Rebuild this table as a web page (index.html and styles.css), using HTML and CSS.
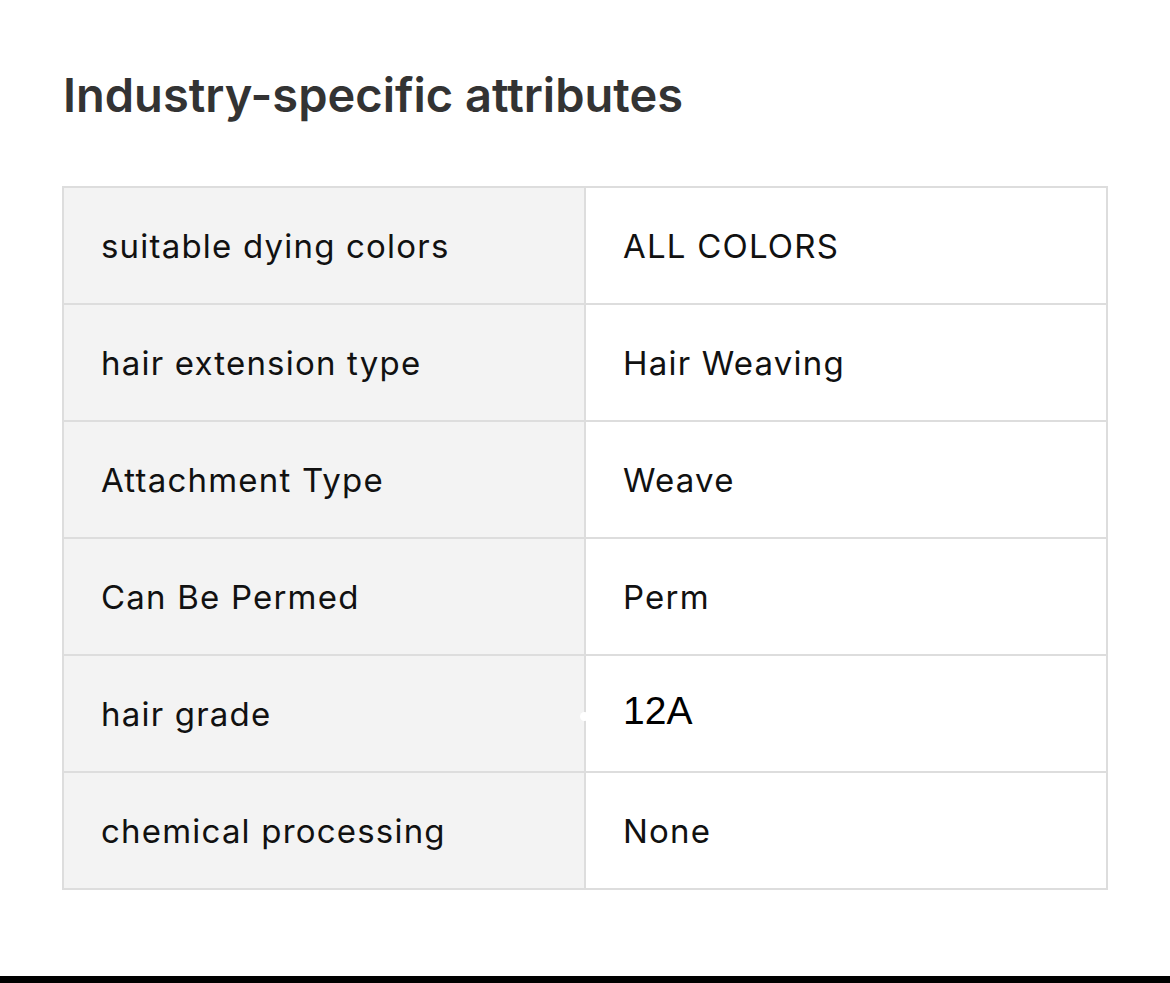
FILE: index.html
```html
<!DOCTYPE html>
<html>
<head>
<meta charset="utf-8">
<link rel="stylesheet" href="styles.css">
</head>
<body>
<div class="page">
  <h1 class="title">Industry-specific attributes</h1>
  <table class="attrs">
    <tr><td class="k">suitable dying colors</td><td class="v">ALL COLORS</td></tr>
    <tr><td class="k">hair extension type</td><td class="v">Hair Weaving</td></tr>
    <tr><td class="k">Attachment Type</td><td class="v">Weave</td></tr>
    <tr><td class="k">Can Be Permed</td><td class="v">Perm</td></tr>
    <tr><td class="k">hair grade</td><td class="v grade"><span class="dot"></span><span class="alt">12A</span></td></tr>
    <tr><td class="k">chemical processing</td><td class="v">None</td></tr>
  </table>
</div>
<div class="bar"></div>
</body>
</html>
```
FILE: styles.css
```css
html, body { margin: 0; padding: 0; background: #fff; }
body { font-family: Inter, "Noto Sans", sans-serif; }
.page { padding: 62px 62px 0 62px; height: 976px; box-sizing: border-box; }
.title {
  margin: 0 0 0 1px;
  font-size: 47px;
  font-weight: 600;
  color: #333;
  line-height: 66px;
  letter-spacing: 0;
}
.attrs {
  margin-top: 58px;
  width: 1046px;
  border-collapse: collapse;
  border: 2px solid #ddd;
}
.attrs td {
  border: 2px solid #ddd;
  height: 115px;
  padding: 0 0 0 37px;
  font-size: 33px;
  color: #111;
  letter-spacing: 1.2px;
  vertical-align: middle;
}
.attrs td.k { background: #f3f3f3; width: 483px; }
.attrs td.v { background: #fff; }
.grade { position: relative; }
.alt { font-family: "Liberation Sans", Arial, sans-serif; font-size: 39px; letter-spacing: 0; color: #000; position: relative; top: -3px; }
.dot { position: absolute; left: -6px; top: 56px; width: 9px; height: 9px; border-radius: 50%; background: #fff; }
.bar { height: 7px; background: #000; }
```
